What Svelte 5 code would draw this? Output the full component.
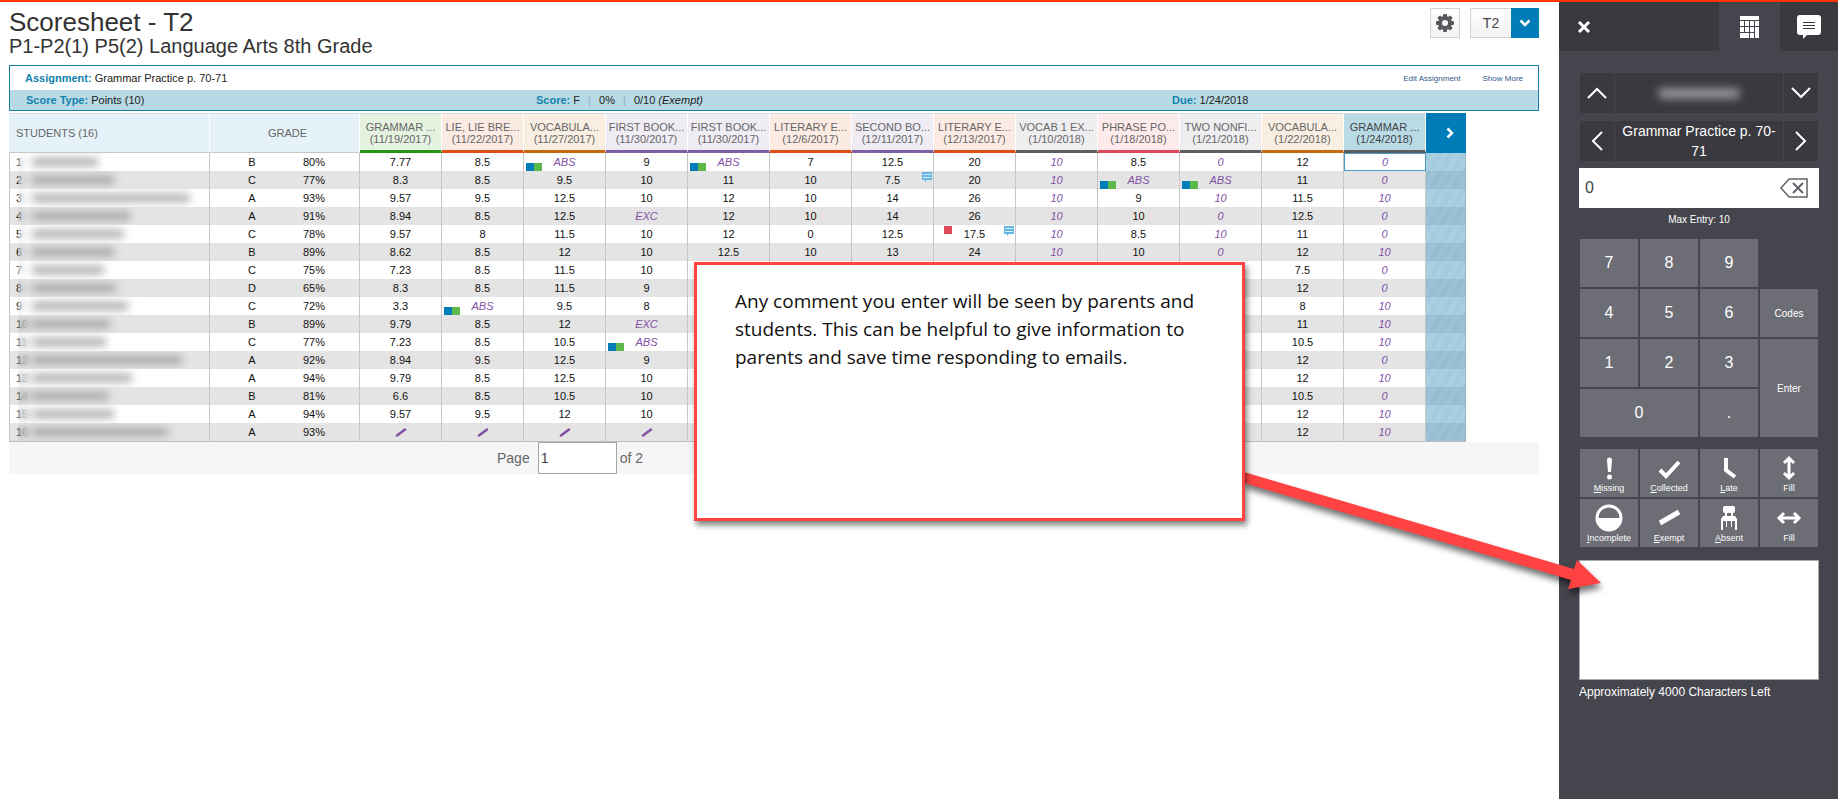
<script lang="ts">
  /**
   * Teacher scoresheet: assignment grid on the left, score inspector on the right.
   */
  type Column = { title: string; date: string; tone: string; selected?: boolean };
  type Row = { letter: string; percent: string; nameWidth: number; scores: string[] };

  const columns: Column[] = [
    { title: 'GRAMMAR ...', date: '11/19/2017', tone: 'green' },
    { title: 'LIE, LIE BRE...', date: '11/22/2017', tone: 'orange' },
    { title: 'VOCABULA...', date: '11/27/2017', tone: 'tan' },
    { title: 'FIRST BOOK...', date: '11/30/2017', tone: 'purple' },
    { title: 'FIRST BOOK...', date: '11/30/2017', tone: 'purple' },
    { title: 'LITERARY E...', date: '12/6/2017', tone: 'orange' },
    { title: 'SECOND BO...', date: '12/11/2017', tone: 'purple' },
    { title: 'LITERARY E...', date: '12/13/2017', tone: 'orange' },
    { title: 'VOCAB 1 EX...', date: '1/10/2018', tone: 'grey' },
    { title: 'PHRASE PO...', date: '1/18/2018', tone: 'pink' },
    { title: 'TWO NONFI...', date: '1/21/2018', tone: 'grey' },
    { title: 'VOCABULA...', date: '1/22/2018', tone: 'tan' },
    { title: 'GRAMMAR ...', date: '1/24/2018', tone: 'grey', selected: true }
  ];

  // Extra-credit style columns show their numbers in purple italics
  const italicColumns = [8, 10, 12];

  const row = (letter: string, percent: number, nameWidth: number, scores: string): Row => ({
    letter,
    percent: `${percent}%`,
    nameWidth,
    scores: scores.split(' ').map((s) => (s === '_' ? '' : s))
  });

  // "_" is an empty score, "/" an exempt one
  const rows: Row[] = [
    row('B', 80, 66, '7.77 8.5 ABS 9 ABS 7 12.5 20 10 8.5 0 12 0'),
    row('C', 77, 82, '8.3 8.5 9.5 10 11 10 7.5 20 10 ABS ABS 11 0'),
    row('A', 93, 158, '9.57 9.5 12.5 10 12 10 14 26 10 9 10 11.5 10'),
    row('A', 91, 98, '8.94 8.5 12.5 EXC 12 10 14 26 10 10 0 12.5 0'),
    row('C', 78, 92, '9.57 8 11.5 10 12 0 12.5 17.5 10 8.5 10 11 0'),
    row('B', 89, 82, '8.62 8.5 12 10 12.5 10 13 24 10 10 0 12 10'),
    row('C', 75, 72, '7.23 8.5 11.5 10 _ _ _ _ _ _ _ 7.5 0'),
    row('D', 65, 84, '8.3 8.5 11.5 9 _ _ _ _ _ _ _ 12 0'),
    row('C', 72, 96, '3.3 ABS 9.5 8 _ _ _ _ _ _ _ 8 10'),
    row('B', 89, 78, '9.79 8.5 12 EXC _ _ _ _ _ _ _ 11 10'),
    row('C', 77, 74, '7.23 8.5 10.5 ABS _ _ _ _ _ _ _ 10.5 10'),
    row('A', 92, 150, '8.94 9.5 12.5 9 _ _ _ _ _ _ _ 12 0'),
    row('A', 94, 100, '9.79 8.5 12.5 10 _ _ _ _ _ _ _ 12 10'),
    row('B', 81, 76, '6.6 8.5 10.5 10 _ _ _ _ _ _ _ 10.5 0'),
    row('A', 94, 82, '9.57 9.5 12 10 _ _ _ _ _ _ _ 12 10'),
    row('A', 93, 136, '/ / / / _ _ _ _ _ _ _ 12 10')
  ];

  const comments = ['1-6', '4-7'];
  const missing = ['4-7'];

  const keys = ['7', '8', '9', '4', '5', '6', 'Codes', '1', '2', '3', 'Enter', '0', '.'];

  const codes = [
    { icon: 'missing', key: 'M', rest: 'issing' },
    { icon: 'collected', key: 'C', rest: 'ollected' },
    { icon: 'late', key: 'L', rest: 'ate' },
    { icon: 'fill-down', key: '', rest: 'Fill' },
    { icon: 'incomplete', key: 'I', rest: 'ncomplete' },
    { icon: 'exempt', key: 'E', rest: 'xempt' },
    { icon: 'absent', key: 'A', rest: 'bsent' },
    { icon: 'fill-right', key: '', rest: 'Fill' }
  ];

  let score = $state('0');
  let page = $state('1');
  let comment = $state('');

  function press(key: string) {
    if (key === 'Codes' || key === 'Enter') return;
    score = score === '0' && key !== '.' ? key : score + key;
  }
</script>

<div class="app">
  <main>
    <header class="page-head">
      <div>
        <h1>Scoresheet - T2</h1>
        <h2>P1-P2(1) P5(2) Language Arts 8th Grade</h2>
      </div>
      <div class="head-tools">
        <button class="gear" aria-label="Settings">
          <svg width="20" height="20" viewBox="0 0 20 20">
            <g fill="#58585d">
              <circle cx="10" cy="10" r="7" />
              {#each [0, 45, 90, 135] as turn}
                <rect x="8" y="1" width="4" height="18" rx="1" transform="rotate({turn} 10 10)" />
              {/each}
            </g>
            <circle cx="10" cy="10" r="3" fill="#f8f8f8" />
          </svg>
        </button>
        <button class="term">
          <span class="term-name">T2</span>
          <span class="term-arrow">
            <svg width="12" height="8" viewBox="0 0 12 8"><path d="M1.5 1.5 6 6l4.5-4.5" fill="none" stroke="#fff" stroke-width="2.5" /></svg>
          </span>
        </button>
      </div>
    </header>

    <section class="info">
      <div class="info-row">
        <span><b>Assignment:</b> Grammar Practice p. 70-71</span>
        <nav>
          <a href="#edit">Edit Assignment</a>
          <a href="#more">Show More</a>
        </nav>
      </div>
      <div class="info-row details">
        <span><b>Score Type:</b> Points (10)</span>
        <span><b>Score:</b> F <i class="bar">|</i> 0% <i class="bar">|</i> 0/10 <em>(Exempt)</em></span>
        <span><b>Due:</b> 1/24/2018</span>
      </div>
    </section>

    <table>
      <colgroup>
        <col class="col-student" />
        <col class="col-letter" />
        <col class="col-percent" />
        {#each columns as _}<col class="col-score" />{/each}
        <col class="col-next" />
      </colgroup>
      <thead>
        <tr>
          <th class="students">STUDENTS (16)</th>
          <th colspan="2" class="grade">GRADE</th>
          {#each columns as col}
            <th class="score-head {col.tone}" class:selected={col.selected}>{col.title}<br />({col.date})</th>
          {/each}
          <th class="next">
            <button aria-label="Next assignments">
              <svg width="8" height="12" viewBox="0 0 8 12"><path d="M1.5 1.5 6 6l-4.5 4.5" fill="none" stroke="#fff" stroke-width="2.5" /></svg>
            </button>
          </th>
        </tr>
      </thead>
      <tbody>
        {#each rows as student, r}
          <tr>
            <td class="student">
              <span class="number">{r + 1}</span>
              <span class="veil"><span class="hidden-name" style="width: {student.nameWidth}px"></span></span>
            </td>
            <td class="letter">{student.letter}</td>
            <td class="percent">{student.percent}</td>
            {#each student.scores as value, c}
              <td
                class="score"
                class:special={italicColumns.includes(c) || value === 'ABS' || value === 'EXC'}
                class:current={r === 0 && c === 12}
              >
                {#if value === '/'}
                  <svg class="slash" width="12" height="9" viewBox="0 0 12 9"><path d="M2 7.5l8-6" stroke="#8250a5" stroke-width="2.5" stroke-linecap="round" /></svg>
                {:else}
                  {value}
                {/if}
                {#if value === 'ABS'}<i class="flag absent"></i>{/if}
                {#if missing.includes(`${r}-${c}`)}<i class="flag missing"></i>{/if}
                {#if comments.includes(`${r}-${c}`)}
                  <svg class="note" width="10" height="10" viewBox="0 0 10 10">
                    <path d="M0 0h10v8H5L3 10V8H0z" fill="#62b5e5" />
                    <path d="M1 2.5h8M1 5.5h8" stroke="#d8eefa" />
                  </svg>
                {/if}
              </td>
            {/each}
            <td class="next-strip"></td>
          </tr>
        {/each}
      </tbody>
    </table>

    <footer class="pager">
      <label for="page">Page</label>
      <input id="page" type="text" bind:value={page} />
      <span>of 2</span>
    </footer>
  </main>

  <aside>
    <div class="tabs">
      <button class="close" aria-label="Close">
        <svg width="14" height="14" viewBox="0 0 14 14"><path d="M2 2l10 10M12 2 2 12" stroke="#fff" stroke-width="3" /></svg>
      </button>
      <button class="tab active" aria-label="Keypad">
        <svg width="19" height="22" viewBox="0 0 19 22" fill="#fff">
          <path d="M0 0h19v4H0zM0 5h4v5H0zM5 5h4v5H5zM10 5h4v5h-4zM15 5h4v5h-4zM0 11h4v5H0zM5 11h4v5H5zM10 11h4v5h-4zM15 11h4v11h-4zM0 17h9v5H0zM10 17h4v5h-4z" />
        </svg>
      </button>
      <button class="tab" aria-label="Comments">
        <svg width="24" height="24" viewBox="0 0 24 24">
          <path d="M3 0h18a3 3 0 0 1 3 3v14a3 3 0 0 1-3 3H10l-4 4v-4H3a3 3 0 0 1-3-3V3a3 3 0 0 1 3-3z" fill="#fff" />
          <path d="M6 7.5h12M6 10.5h12M6 13.5h12" stroke="#3a3940" stroke-width="1" />
        </svg>
      </button>
    </div>

    <div class="panel">
      <div class="stepper">
        <button aria-label="Previous student">
          <svg width="20" height="12" viewBox="0 0 20 12"><path d="M1 11l9-9 9 9" /></svg>
        </button>
        <div class="step-label"><span class="hidden-student"></span></div>
        <button aria-label="Next student">
          <svg width="20" height="12" viewBox="0 0 20 12"><path d="M1 1l9 9 9-9" /></svg>
        </button>
      </div>
      <div class="stepper">
        <button aria-label="Previous assignment">
          <svg width="12" height="20" viewBox="0 0 12 20"><path d="M11 1l-9 9 9 9" /></svg>
        </button>
        <div class="step-label">Grammar Practice p. 70-71</div>
        <button aria-label="Next assignment">
          <svg width="12" height="20" viewBox="0 0 12 20"><path d="M1 1l9 9-9 9" /></svg>
        </button>
      </div>

      <div class="entry">
        <input type="text" aria-label="Score" bind:value={score} />
        <button aria-label="Clear score" onclick={() => (score = '')}>
          <svg width="28" height="20" viewBox="0 0 28 20" fill="none" stroke="#626268">
            <path d="M9 1h18v18H9L1 10z" stroke-width="1.5" />
            <path d="M13 5l10 10M23 5 13 15" stroke-width="2" />
          </svg>
        </button>
      </div>
      <p class="max">Max Entry: 10</p>

      <div class="keypad">
        {#each keys as key}
          <button
            class:word={key.length > 1}
            class:codes={key === 'Codes'}
            class:enter={key === 'Enter'}
            class:row-start={key === '4' || key === '1'}
            class:zero={key === '0'}
            onclick={() => press(key)}>{key}</button>
        {/each}
      </div>

      <div class="marks">
        {#each codes as code}
          <button>
            <svg width="28" height="28" viewBox="0 0 28 28" fill="none" stroke="#fff" stroke-width="3">
              {#if code.icon === 'missing'}
                <path d="M12 6a2.5 2.5 0 0 1 5 0l-1 12h-3z" fill="#fff" stroke="none" />
                <circle cx="14.5" cy="23" r="2.5" fill="#fff" stroke="none" />
              {:else if code.icon === 'collected'}
                <path d="M5 16l6 6L24 8" stroke-width="4" />
              {:else if code.icon === 'late'}
                <path d="M11 4v12l9 7" stroke-width="4" />
              {:else if code.icon === 'fill-down'}
                <path d="M14 5v18M9 9l5-5 5 5M9 19l5 5 5-5" />
              {:else if code.icon === 'incomplete'}
                <circle cx="14" cy="14" r="12" />
                <path d="M1 14h26a13 13 0 0 1-26 0z" fill="#fff" stroke="none" />
              {:else if code.icon === 'exempt'}
                <path d="M5 19 24 8" stroke-width="5" />
              {:else if code.icon === 'absent'}
                <g fill="#fff" stroke="none">
                  <rect x="8" y="2" width="12" height="7" rx="2" />
                  <path d="M10 9h2v3h4V9h2v3h2l2 3v2H6v-2l2-3h2z" />
                  <path d="M6 17h2v9H6zM11 17h1v6h-1zM16 17h1v6h-1zM20 17h2v9h-2z" />
                </g>
              {:else}
                <path d="M5 14h18M9 9l-5 5 5 5M19 9l5 5-5 5" />
              {/if}
            </svg>
            <span>{#if code.key}<u>{code.key}</u>{/if}{code.rest}</span>
          </button>
        {/each}
      </div>

      <textarea id="comment" bind:value={comment}></textarea>
      <label class="left" for="comment">Approximately 4000 Characters Left</label>
    </div>
  </aside>

  <svg class="arrow" width="368" height="132" viewBox="0 0 368 132">
    <path d="M4 10 334 107l3-9 24 23-33 6 3-9L4 21z" fill="#ff4242" />
  </svg>
  <div class="callout">
    Any comment you enter will be seen by parents and students. This can be helpful to give information to parents and save time responding to emails.
  </div>
</div>

<style>
  :global(body) { margin: 0; }

  .app {
    position: relative;
    display: flex;
    min-height: 100vh;
    box-sizing: border-box;
    border-top: 2px solid #ff3300;
    background: #fff;
    color: #222;
    font-family: "Liberation Sans", Arial, sans-serif;
    font-size: 11px;
  }

  button {
    margin: 0;
    padding: 0;
    border: 0;
    font-family: inherit;
    color: inherit;
    cursor: pointer;
  }

  svg { display: block; }

  main {
    flex: 1;
    min-width: 0;
    padding: 6px 20px 0 9px;
  }

  .page-head {
    display: flex;
    justify-content: space-between;
    height: 57px;
  }

  h1, h2 {
    margin: 0;
    font-weight: 400;
    color: #333;
  }

  h1 { font-size: 26px; line-height: 28px; }
  h2 { font-size: 20px; line-height: 20px; }

  .head-tools {
    display: flex;
    align-items: flex-start;
    gap: 10px;
  }

  .gear, .term {
    display: flex;
    align-items: center;
    justify-content: center;
    box-sizing: border-box;
    height: 30px;
    border: 1px solid #d2d2d2;
    background: linear-gradient(#fff, #f2f2f2);
  }

  .gear { width: 30px; }

  .term { border-right: 0; }

  .term-name {
    width: 40px;
    font-size: 14px;
    color: #444;
  }

  .term-arrow {
    display: flex;
    align-items: center;
    justify-content: center;
    width: 28px;
    height: 30px;
    background: #007db8;
  }

  .info { border: 1px solid #1a7fa5; }

  .info-row {
    display: flex;
    align-items: center;
    justify-content: space-between;
    height: 24px;
    padding: 0 15px;
  }

  .info b { color: #1482ad; }

  .info nav {
    display: flex;
    gap: 22px;
    font-size: 8px;
  }

  .info a {
    color: #31598c;
    text-decoration: none;
  }

  .info .details {
    display: grid;
    grid-template-columns: 510px 636px 1fr;
    height: 20px;
    padding: 0 0 0 16px;
    background: #b8dae7;
  }

  .bar {
    margin: 0 5px;
    font-style: normal;
    color: #8fb0bd;
  }

  table {
    margin-top: 2px;
    table-layout: fixed;
    width: 1457px;
    border-collapse: separate;
    border-spacing: 0;
    border-bottom: 1px solid #bdbdbd;
  }

  .col-student { width: 201px; }
  .col-letter { width: 84px; }
  .col-percent { width: 66px; }
  .col-score { width: 82px; }
  .col-next { width: 40px; }

  th, td {
    box-sizing: border-box;
    padding: 0;
    overflow: hidden;
    white-space: nowrap;
    text-align: center;
  }

  th {
    height: 40px;
    border-top: 1px solid #d2dadd;
    border-right: 1px solid #fff;
    background: #e6f2f9;
    font-weight: 400;
    line-height: 12px;
    color: #666;
  }

  .students {
    padding-left: 7px;
    text-align: left;
  }

  .grade { padding-left: 6px; }
  .grade, .students { border-bottom: 1px solid #c6c6c6; }

  .score-head {
    padding-top: 2px;
    border-bottom: 3px solid;
  }

  .green { background: #e5f2e0; border-bottom-color: #249410; }
  .orange { background: #fcebe3; border-bottom-color: #dd4f16; }
  .tan { background: #f8efe2; border-bottom-color: #c26b12; }
  .purple { background: #efecf4; border-bottom-color: #7c5ea3; }
  .grey { background: #eeeef0; border-bottom-color: #5e5e62; }
  .pink { background: #fdeaeb; border-bottom-color: #de485a; }
  .selected { background: #b8dbe6; color: #444; }

  .next {
    border: 0;
    background: #007db8;
  }

  .next button {
    display: flex;
    align-items: center;
    justify-content: center;
    width: 100%;
    height: 40px;
    padding-left: 8px;
    background: none;
  }

  td {
    height: 18px;
    border-right: 1px solid #c6c6c6;
    line-height: 18px;
    color: #111;
  }

  tbody tr:nth-child(even) { background: #e4e4e4; }

  .student {
    position: relative;
    padding-left: 6px;
    border-left: 1px solid #c6c6c6;
    text-align: left;
  }

  .veil {
    position: absolute;
    inset: 0 6px 0 8px;
    display: flex;
    align-items: center;
    padding-left: 14px;
    backdrop-filter: blur(4px);
  }

  .hidden-name {
    height: 8px;
    background: #888;
    opacity: 0.7;
    filter: blur(4px);
  }

  .letter { border-right: 0; }

  .percent {
    padding-left: 9px;
    text-align: left;
  }

  .score { position: relative; }

  .slash { margin: 0 auto; }

  .special {
    font-style: italic;
    color: #8250a5;
  }

  .current {
    border: 1px solid #4a9cc4;
    background: #fff;
    line-height: 16px;
  }

  .flag {
    position: absolute;
    height: 8px;
  }

  .flag.absent {
    left: 2px;
    bottom: 0;
    width: 16px;
    background: linear-gradient(90deg, #007db8 50%, #5cb848 50%);
  }

  .flag.missing {
    left: 10px;
    top: 1px;
    width: 8px;
    background: #e04a5c;
  }

  .note {
    position: absolute;
    right: 1px;
    top: 1px;
  }

  .next-strip {
    border-color: #94b8c8;
    background: repeating-linear-gradient(120deg, #a4cbde 0 5px, #aacfe1 5px 10px);
  }

  tr:nth-child(even) .next-strip {
    background: repeating-linear-gradient(120deg, #96bed2 0 5px, #9bc2d5 5px 10px);
  }

  .pager {
    display: flex;
    align-items: center;
    height: 32px;
    padding-left: 488px;
    background: #f6f6f6;
    font-size: 14px;
    color: #666;
  }

  .pager input {
    box-sizing: border-box;
    width: 79px;
    height: 32px;
    margin: 0 3px 0 8px;
    padding: 0 2px;
    border: 1px solid #a5a5a5;
    font: inherit;
    color: #444;
  }

  aside {
    display: flex;
    flex-direction: column;
    flex: 0 0 279px;
    min-width: 0;
    background: #45454e;
    color: #fff;
  }

  .tabs {
    display: flex;
    height: 49px;
    background: #3a3940;
  }

  .tabs button {
    display: flex;
    align-items: center;
    background: none;
  }

  .tabs .close {
    flex: 1;
    padding-left: 18px;
  }

  .tabs .tab {
    width: 58px;
    justify-content: center;
  }

  .tabs .active {
    width: 61px;
    background: #45454e;
  }

  .panel {
    display: flex;
    flex-direction: column;
    padding: 22px 19px 0 20px;
  }

  .stepper {
    display: flex;
    height: 40px;
    margin: 0 1px 8px;
    gap: 1px;
  }

  .stepper button {
    display: flex;
    align-items: center;
    justify-content: center;
    width: 34px;
    background: #3a3940;
  }

  .stepper path {
    fill: none;
    stroke: #fff;
    stroke-width: 2;
  }

  .step-label {
    display: flex;
    flex: 1;
    align-items: center;
    justify-content: center;
    background: #3a3940;
    font-size: 14px;
    line-height: 20px;
    text-align: center;
  }

  .hidden-student {
    width: 80px;
    height: 9px;
    background: #a5a5a8;
    filter: blur(5px);
  }

  .entry {
    display: flex;
    height: 40px;
    margin-top: -1px;
    background: #fff;
  }

  .entry input {
    flex: 1;
    min-width: 0;
    padding: 0 6px;
    border: 0;
    background: none;
    font: inherit;
    font-size: 16px;
    color: #444;
  }

  .entry button {
    padding: 0 11px;
    background: none;
  }

  .max {
    margin: 6px 0 13px;
    font-size: 10px;
    line-height: 12px;
    text-align: center;
  }

  .keypad, .marks {
    display: grid;
    grid-template-columns: repeat(4, 1fr);
    grid-auto-rows: 48px;
    gap: 2px;
    margin: 0 1px;
  }

  .keypad button, .marks button { background: #6d6e75; }

  .keypad button { font-size: 16px; }
  .keypad .word { font-size: 10px; }
  .keypad .row-start { grid-column: 1; }
  .keypad .codes { grid-area: 2 / 4; }
  .keypad .enter { grid-area: 3 / 4 / span 2; }
  .keypad .zero { grid-column: 1 / span 2; }

  .marks { margin-top: 12px; }

  .marks button {
    display: flex;
    flex-direction: column;
    align-items: center;
    padding-top: 5px;
    font-size: 9px;
    line-height: 12px;
  }

  textarea {
    box-sizing: border-box;
    width: 100%;
    height: 120px;
    margin: 13px 0 5px;
    padding: 6px;
    border: 1px solid #a9a9a9;
    background: #fff;
    font: inherit;
    resize: none;
  }

  .left {
    font-size: 12px;
    line-height: 14px;
  }

  .callout {
    position: absolute;
    left: 694px;
    top: 260px;
    box-sizing: border-box;
    width: 551px;
    height: 259px;
    padding: 22px 38px;
    border: 3px solid #ff4242;
    background: #fff;
    box-shadow: 2px 4px 6px rgba(0, 0, 0, 0.5);
    font-family: "Open Sans", "Noto Sans", sans-serif;
    font-size: 19px;
    line-height: 28px;
    color: #111;
  }

  .arrow {
    position: absolute;
    left: 1240px;
    top: 460px;
    overflow: visible;
    filter: drop-shadow(1px 5px 3px rgba(0, 0, 0, 0.55));
    pointer-events: none;
  }
</style>
